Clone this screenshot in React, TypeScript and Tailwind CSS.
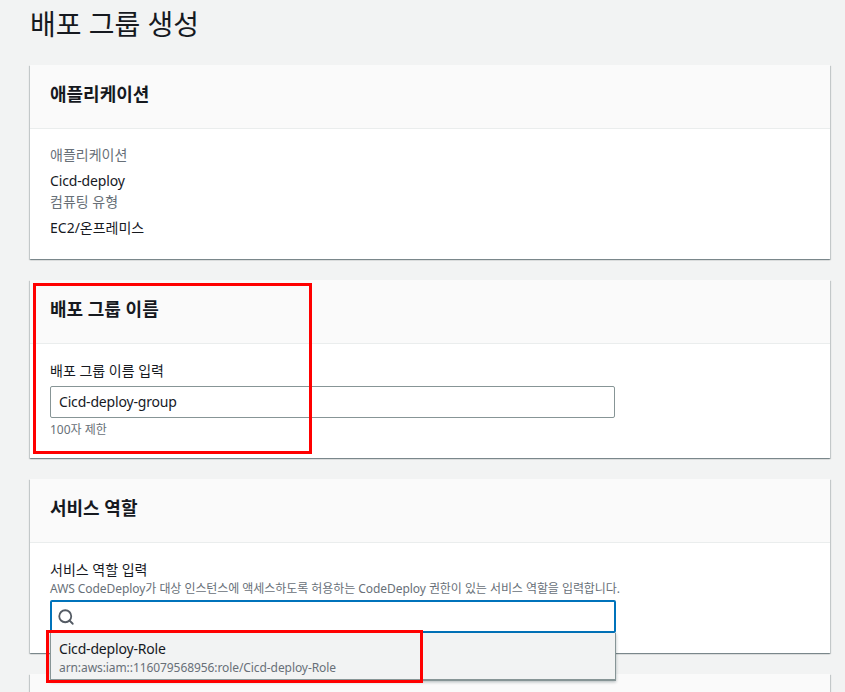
import { Search } from "lucide-react";
import type { ReactNode } from "react";

const fontStack = "font-['Noto_Sans','Noto_Sans_CJK_KR',sans-serif]";

const Panel = ({
  title,
  className,
  children,
}: {
  title: string;
  className: string;
  children: ReactNode;
}) => (
  <section
    className={`bg-white shadow-[0_1px_1px_0_rgba(0,28,36,0.3),1px_1px_1px_0_rgba(0,28,36,0.15),-1px_1px_1px_0_rgba(0,28,36,0.15)] ${className}`}
  >
    <div className="h-[64px] bg-[#fafafa] border-b border-[#eaeded] pl-5 pt-[16px]">
      <h2 className="text-[18px] leading-[27px] font-bold text-[#16191f]">
        {title}
      </h2>
    </div>
    {children}
  </section>
);

const Label = ({ children }: { children: ReactNode }) => (
  <div className="text-[14px] leading-[20px] text-[#687078]">{children}</div>
);

export default function App() {
  return (
    <div
      className={`relative h-[692px] overflow-hidden bg-[#f2f3f3] pl-[30px] pr-[15px] ${fontStack}`}
    >
      <h1 className="h-[65px] pt-[4px] text-[28px] leading-[40px] font-normal text-[#16191f]">
        배포 그룹 생성
      </h1>

      <div className="flex flex-col gap-[21px]">
        <Panel title="애플리케이션" className="h-[194px]">
          <div className="px-5 pt-[16px] text-[14px]">
            <Label>애플리케이션</Label>
            <div className="mt-[6px] leading-[20px] tracking-[-0.15px] text-[#16191f]">
              Cicd-deploy
            </div>
            <div className="mt-[1px]">
              <Label>컴퓨팅 유형</Label>
            </div>
            <div className="mt-[6px] leading-[20px] text-[#16191f]">
              EC2/온프레미스
            </div>
          </div>
        </Panel>

        <Panel title="배포 그룹 이름" className="h-[178px]">
          <div className="px-5 pt-[17px]">
            <div className="text-[14px] leading-[20px] text-[#16191f]">
              배포 그룹 이름 입력
            </div>
            <div className="mt-[5px] flex h-[32px] w-[565px] items-center rounded-[2px] border border-[#879596] bg-white px-[8px] pb-[1px] text-[14px] tracking-[-0.18px] text-[#16191f]">
              Cicd-deploy-group
            </div>
            <div className="mt-[2px] text-[12px] leading-[20px] text-[#687078]">
              100자 제한
            </div>
          </div>
        </Panel>

        <Panel title="서비스 역할" className="h-[174px]">
          <div className="px-5 pt-[17px]">
            <div className="text-[14px] leading-[20px] text-[#16191f]">
              서비스 역할 입력
            </div>
            <div className="mt-[1px] text-[12px] leading-[16px] tracking-[-0.06px] text-[#687078]">
              AWS CodeDeploy가 대상 인스턴스에 액세스하도록 허용하는 CodeDeploy 권한이 있는 서비스 역할을 입력합니다.
            </div>
            <div className="relative mt-[3px] w-[566px]">
              <div className="flex h-[33px] items-center rounded-[2px] border-2 border-[#0073bb] bg-white pl-[5px]">
                <Search size={18} strokeWidth={2.4} className="text-[#545b64]" />
              </div>
              <div className="absolute left-0 right-0 top-[33px] z-10 h-[48px] border-x border-b-2 border-[#879596] bg-[#f2f3f3] pl-[8px] pt-[6px] shadow-[0_1px_3px_rgba(0,28,36,0.3)]">
                <div className="text-[14px] leading-[20px] tracking-[-0.18px] text-[#16191f]">
                  Cicd-deploy-Role
                </div>
                <div className="text-[12px] leading-[18px] tracking-[-0.08px] text-[#687078]">
                  arn:aws:iam::116079568956:role/Cicd-deploy-Role
                </div>
              </div>
            </div>
          </div>
        </Panel>

        <Panel title="" className="h-[80px]">
          <div />
        </Panel>
      </div>

      <div className="absolute left-[33px] top-[283px] h-[171px] w-[279px] border-[3px] border-[#ff0000]" />
      <div className="absolute left-[46px] top-[630px] z-20 h-[53px] w-[377px] border-[3px] border-[#ff0000]" />
    </div>
  );
}
